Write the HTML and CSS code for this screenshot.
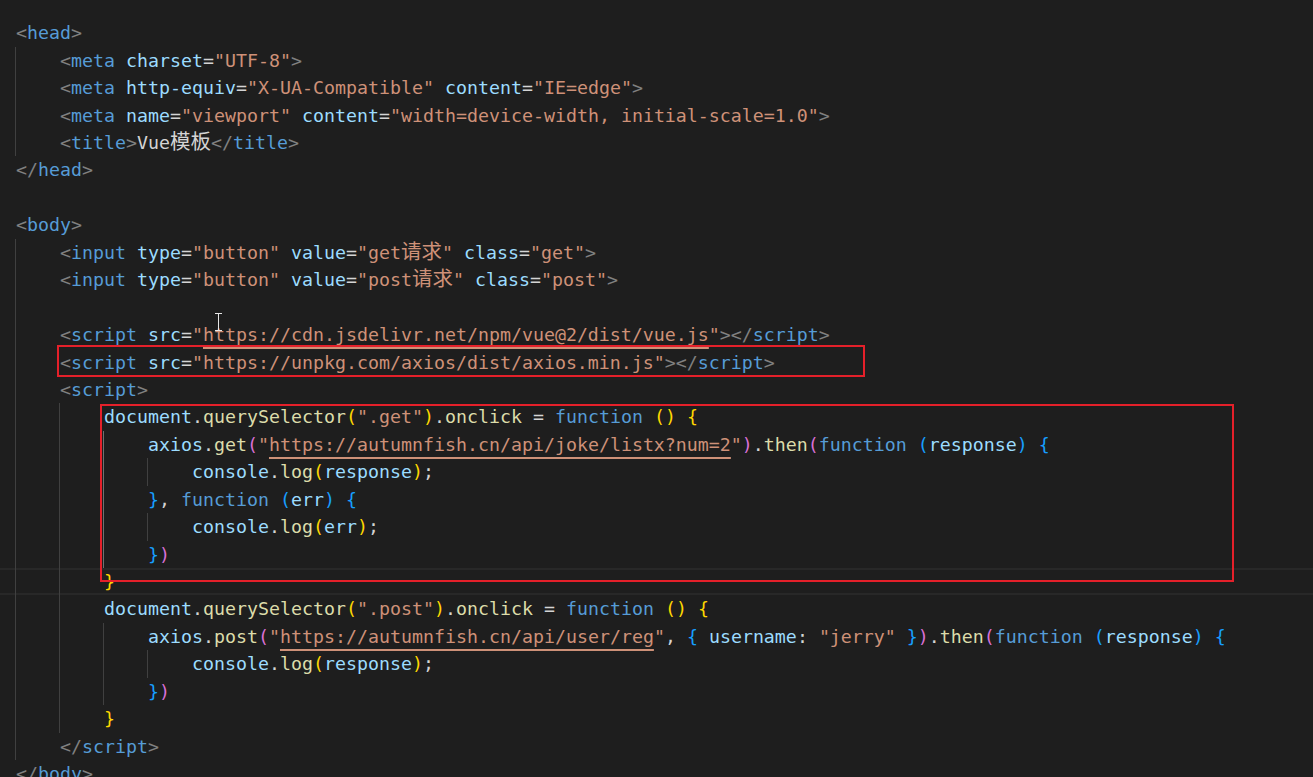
FILE: index.html
```html
<!DOCTYPE html>
<html lang="zh">
<head>
<meta charset="UTF-8">
<title>Vue模板 - editor</title>
<link rel="stylesheet" href="styles.css">
</head>
<body>
<div class="editor">
<div class="ln"><span class="p">&lt;</span><span class="t">head</span><span class="p">&gt;</span></div>
<div class="ln"><span class="ig"></span><span class="p">&lt;</span><span class="t">meta</span> <span class="a">charset</span>=<span class="s">"UTF-8"</span><span class="p">&gt;</span></div>
<div class="ln"><span class="ig"></span><span class="p">&lt;</span><span class="t">meta</span> <span class="a">http-equiv</span>=<span class="s">"X-UA-Compatible"</span> <span class="a">content</span>=<span class="s">"IE=edge"</span><span class="p">&gt;</span></div>
<div class="ln"><span class="ig"></span><span class="p">&lt;</span><span class="t">meta</span> <span class="a">name</span>=<span class="s">"viewport"</span> <span class="a">content</span>=<span class="s">"width=device-width, initial-scale=1.0"</span><span class="p">&gt;</span></div>
<div class="ln"><span class="ig"></span><span class="p">&lt;</span><span class="t">title</span><span class="p">&gt;</span>Vue<span class="c">模板</span><span class="p">&lt;/</span><span class="t">title</span><span class="p">&gt;</span></div>
<div class="ln"><span class="p">&lt;/</span><span class="t">head</span><span class="p">&gt;</span></div>
<div class="ln"></div>
<div class="ln"><span class="p">&lt;</span><span class="t">body</span><span class="p">&gt;</span></div>
<div class="ln"><span class="ig"></span><span class="p">&lt;</span><span class="t">input</span> <span class="a">type</span>=<span class="s">"button"</span> <span class="a">value</span>=<span class="s">"get<span class="c">请求</span>"</span> <span class="a">class</span>=<span class="s">"get"</span><span class="p">&gt;</span></div>
<div class="ln"><span class="ig"></span><span class="p">&lt;</span><span class="t">input</span> <span class="a">type</span>=<span class="s">"button"</span> <span class="a">value</span>=<span class="s">"post<span class="c">请求</span>"</span> <span class="a">class</span>=<span class="s">"post"</span><span class="p">&gt;</span></div>
<div class="ln"><span class="ig"></span></div>
<div class="ln"><span class="ig"></span><span class="p">&lt;</span><span class="t">script</span> <span class="a">src</span>=<span class="s">"<span class="u">https://cdn.jsdelivr.net/npm/vue@2/dist/vue.js</span>"</span><span class="p">&gt;&lt;/</span><span class="t">script</span><span class="p">&gt;</span></div>
<div class="ln"><span class="ig"></span><span class="p">&lt;</span><span class="t">script</span> <span class="a">src</span>=<span class="s">"https://unpkg.com/axios/dist/axios.min.js"</span><span class="p">&gt;&lt;/</span><span class="t">script</span><span class="p">&gt;</span></div>
<div class="ln"><span class="ig"></span><span class="p">&lt;</span><span class="t">script</span><span class="p">&gt;</span></div>
<div class="ln"><span class="ig"></span><span class="ig"></span><span class="v">document</span>.<span class="f">querySelector</span><span class="b1">(</span><span class="s">".get"</span><span class="b1">)</span>.<span class="f">onclick</span> = <span class="k">function</span> <span class="b1">()</span> <span class="b1">{</span></div>
<div class="ln"><span class="ig"></span><span class="ig"></span><span class="ig act"></span><span class="v">axios</span>.<span class="f">get</span><span class="b2">(</span><span class="s">"<span class="u">https://autumnfish.cn/api/joke/listx?num=2</span>"</span><span class="b2">)</span>.<span class="f">then</span><span class="b2">(</span><span class="k">function</span> <span class="b3">(</span><span class="v">response</span><span class="b3">)</span> <span class="b3">{</span></div>
<div class="ln"><span class="ig"></span><span class="ig"></span><span class="ig act"></span><span class="ig"></span><span class="v">console</span>.<span class="f">log</span><span class="b1">(</span><span class="v">response</span><span class="b1">)</span>;</div>
<div class="ln"><span class="ig"></span><span class="ig"></span><span class="ig act"></span><span class="b3">}</span>, <span class="k">function</span> <span class="b3">(</span><span class="v">err</span><span class="b3">)</span> <span class="b3">{</span></div>
<div class="ln"><span class="ig"></span><span class="ig"></span><span class="ig act"></span><span class="ig"></span><span class="v">console</span>.<span class="f">log</span><span class="b1">(</span><span class="v">err</span><span class="b1">)</span>;</div>
<div class="ln"><span class="ig"></span><span class="ig"></span><span class="ig act"></span><span class="b3">}</span><span class="b2">)</span></div>
<div class="ln cur"><span class="ig"></span><span class="ig"></span><span class="b1">}</span></div>
<div class="ln"><span class="ig"></span><span class="ig"></span><span class="v">document</span>.<span class="f">querySelector</span><span class="b1">(</span><span class="s">".post"</span><span class="b1">)</span>.<span class="f">onclick</span> = <span class="k">function</span> <span class="b1">()</span> <span class="b1">{</span></div>
<div class="ln"><span class="ig"></span><span class="ig"></span><span class="ig"></span><span class="v">axios</span>.<span class="f">post</span><span class="b2">(</span><span class="s">"<span class="u">https://autumnfish.cn/api/user/reg</span>"</span>, <span class="b3">{</span> <span class="v">username</span>: <span class="s">"jerry"</span> <span class="b3">}</span><span class="b2">)</span>.<span class="f">then</span><span class="b2">(</span><span class="k">function</span> <span class="b3">(</span><span class="v">response</span><span class="b3">)</span> <span class="b3">{</span></div>
<div class="ln"><span class="ig"></span><span class="ig"></span><span class="ig"></span><span class="ig"></span><span class="v">console</span>.<span class="f">log</span><span class="b1">(</span><span class="v">response</span><span class="b1">)</span>;</div>
<div class="ln"><span class="ig"></span><span class="ig"></span><span class="ig"></span><span class="b3">}</span><span class="b2">)</span></div>
<div class="ln"><span class="ig"></span><span class="ig"></span><span class="b1">}</span></div>
<div class="ln"><span class="ig"></span><span class="p">&lt;/</span><span class="t">script</span><span class="p">&gt;</span></div>
<div class="ln"><span class="p">&lt;/</span><span class="t">body</span><span class="p">&gt;</span></div>

<div class="mark mark-1"></div>
<div class="mark mark-2"></div>
<svg class="ibeam" width="9" height="18" viewBox="0 0 9 18"><path d="M1 0.5h7M1 17.5h7M4.5 0.5v17" stroke="#e6e6e6" stroke-width="1" fill="none"/></svg>
</div>
</body>
</html>
```
FILE: styles.css
```css
html, body {
  margin: 0;
  padding: 0;
  background: #1e1e1e;
  overflow: hidden;
}

.editor {
  position: relative;
  width: 1313px;
  height: 777px;
  box-sizing: border-box;
  padding-top: 19.3px;
  font-family: "DejaVu Sans Mono", "Liberation Mono", monospace;
  font-size: 18.27px;
  color: #d4d4d4;
  overflow: hidden;
}

.ln {
  height: 27.44px;
  line-height: 27.44px;
  padding-left: 16px;
  white-space: pre;
}

.ln.cur {
  box-shadow: inset 0 2px 0 #282828, inset 0 -2px 0 #282828;
}

.ig {
  display: inline-block;
  width: 44px;
  height: 27.44px;
  vertical-align: top;
  box-shadow: -1px 0 0 #404040;
}

.ig.act {
  box-shadow: -1px 0 0 #707070;
}

.p { color: #808080; }
.t { color: #569cd6; }
.a { color: #9cdcfe; }
.s { color: #ce9178; }
.v { color: #9cdcfe; }
.f { color: #dcdcaa; }
.k { color: #569cd6; }
.b1 { color: #ffd700; }
.b2 { color: #da70d6; }
.b3 { color: #179fff; }

.u {
  text-decoration: underline;
  text-decoration-thickness: 2px;
  text-underline-offset: 6px;
}

.c {
  font-family: "Noto Sans CJK SC", sans-serif;
  font-size: 20.5px;
  line-height: 1;
}

.mark {
  position: absolute;
  border: 2px solid #e5202a;
  box-sizing: border-box;
}

.mark-1 {
  left: 57px;
  top: 345px;
  width: 808px;
  height: 32px;
}

.mark-2 {
  left: 100px;
  top: 404px;
  width: 1134px;
  height: 178px;
}

.ibeam {
  position: absolute;
  left: 214px;
  top: 313px;
}
```
